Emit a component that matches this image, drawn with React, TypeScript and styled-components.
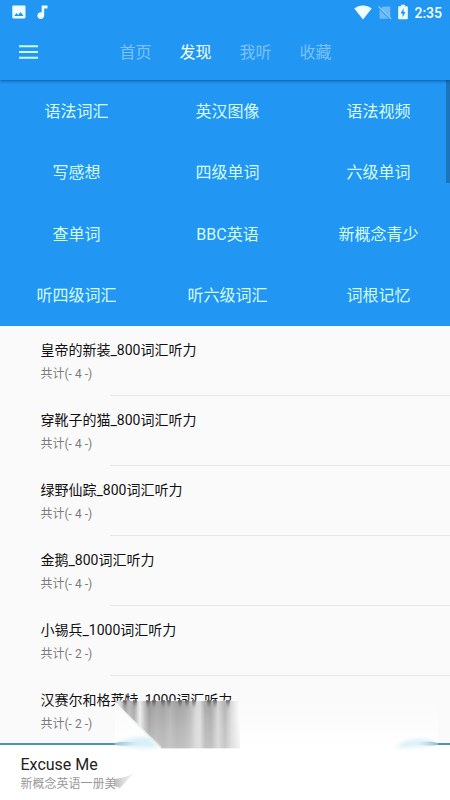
import React from "react";
import styled, { createGlobalStyle } from "styled-components";

const GlobalStyle = createGlobalStyle`
  * { box-sizing: border-box; }
  body {
    margin: 0;
    background: #fafafa;
    font-family: Roboto, "Noto Sans CJK SC", sans-serif;
  }
`;

const Screen = styled.div`
  position: relative;
  display: flex;
  flex-direction: column;
  width: 450px;
  height: 800px;
  overflow: hidden;
  background: #fafafa;
`;

const Header = styled.header`
  position: relative;
  z-index: 1;
  flex: none;
  height: 80px;
  background: #2196f3;
  box-shadow: 0 1px 3px rgba(0, 30, 80, 0.5);
`;

const StatusBar = styled.div`
  display: flex;
  align-items: center;
  height: 24px;
  padding: 0 8px 0 12px;
  color: #f0ffff;
`;

const StatusGroup = styled.div<{ $gap: number }>`
  display: flex;
  align-items: center;
  gap: ${(p) => p.$gap}px;
`;

const Spacer = styled.div`
  flex: 1;
`;

const Clock = styled.span`
  font-size: 14px;
  font-weight: 500;
  line-height: 24px;
  margin-left: 6px;
  padding-top: 2px;
`;

const Toolbar = styled.div`
  display: flex;
  align-items: center;
  height: 56px;
  padding-left: 19px;
`;

const Tabs = styled.nav`
  display: flex;
  gap: 28px;
  margin-left: 81.5px;
  padding-top: 2px;
`;

const Tab = styled.span<{ $active?: boolean }>`
  width: 32px;
  font-size: 16px;
  line-height: 24px;
  white-space: nowrap;
  color: ${(p) => (p.$active ? "#f0ffff" : "#7cc3f9")};
`;

const Categories = styled.section`
  position: relative;
  flex: none;
  display: grid;
  grid-template-columns: repeat(3, 151px);
  grid-template-rows: repeat(4, 61.5px);
  height: 246px;
  padding: 1px 0 0 1px;
  overflow: hidden;
  background: #2196f3;
`;

const Category = styled.div`
  display: flex;
  align-items: center;
  justify-content: center;
  font-size: 16px;
  line-height: 24px;
  color: #d5fbfb;
`;

const ScrollThumb = styled.div`
  position: absolute;
  top: 0;
  right: 0;
  width: 4px;
  height: 103px;
  background: #1a75bd;
`;

const List = styled.main`
  flex: none;
  height: 417px;
  overflow: hidden;
`;

const Row = styled.div`
  position: relative;
  height: 70px;
  padding: 13px 0 0 40.5px;
  &::after {
    content: "";
    position: absolute;
    left: 110px;
    right: 0;
    bottom: 0;
    height: 1px;
    background: #e6e6e6;
  }
`;

const Title = styled.div`
  font-size: 14px;
  line-height: 22px;
  color: #111;
`;

const Count = styled.div`
  margin-top: 3px;
  font-size: 12px;
  line-height: 20px;
  color: #7b7b7b;
`;

const Player = styled.footer`
  flex: none;
  height: 57px;
  padding: 10px 20.5px 0;
  border-top: 2px solid #4b94b5;
  background: #fff;
`;

const Track = styled.div`
  font-size: 16px;
  line-height: 20px;
  color: #222;
`;

const Album = styled.div`
  font-size: 12px;
  line-height: 18px;
  color: #999;
  height: 18px;
`;

const Smear = styled.svg`
  position: absolute;
  z-index: 2;
  left: 100px;
  top: 690px;
`;

const PictureIcon = () => (
  <svg width="14" height="14" viewBox="0 0 14 14">
    <path fill="#f0ffff" fillRule="evenodd" d="M1.5.5h10.8c.7 0 1.2.5 1.2 1.2v10.6c0 .7-.5 1.2-1.2 1.2H1.5C.8 13.500.3 13 .3 12.300V1.700C.3 1 .8.500 1.500.500ZM2.200 11h9.300L8.600 7.100 6.200 10 4.600 8Z" />
  </svg>
);

const NoteIcon = () => (
  <svg width="12" height="14" viewBox="0 0 12 14">
    <path fill="#f0ffff" d="M4.700.5h5.800v3H7.200v7A3.400 3.400 0 1 1 4.700 7.300Z" />
  </svg>
);

const WifiIcon = () => (
  <svg width="18" height="15" viewBox="0 0 18 15">
    <path fill="#f0ffff" d="M.3 3.500C5-.6 13-.6 17.700 3.500L9 14.500Z" />
  </svg>
);

const NoSimIcon = () => (
  <svg width="14" height="15" viewBox="0 0 14 15">
    <path fill="#6dbaf5" d="M5 1.500h6.300c.6 0 1 .4 1 1v11.300H2.500c-.6 0-1-.4-1-1V5Z" />
    <path d="M.8 2.600 12.700 14.600" stroke="#2196f3" strokeWidth="1.500" />
    <path d="M.5 1.500 13.200 14" stroke="#8acaf5" strokeWidth="1.200" />
  </svg>
);

const BatteryIcon = () => (
  <svg width="10" height="16" viewBox="0 0 10 16">
    <path fill="#f0ffff" fillRule="evenodd" d="M3 .7h4v1.500h2c.5 0 .8.3.8.8v11.500c0 .5-.3.800-.8.800H1c-.5 0-.8-.3-.8-.8V3c0-.5.3-.8.8-.8h2ZM5.700 4 2.500 9.500h2v4L7.600 8h-2Z" />
  </svg>
);

const MenuIcon = () => (
  <svg width="19" height="14" viewBox="0 0 19 14">
    <path d="M0 1.300h19M0 7h19M0 12.700h19" stroke="#cafaff" strokeWidth="2" />
  </svg>
);

const streaks: [number, string][] = [
  [0, "#dcdcdc"],
  [5, "#a0a0a0"],
  [9, "#b8b8b8"],
  [14, "#a4a4a4"],
  [20, "#eeeeee"],
  [25, "#b8b8b8"],
  [29, "#969696"],
  [36, "#a6a6a6"],
  [43, "#a0a0a0"],
  [50, "#aeaeae"],
  [57, "#a0a0a0"],
  [64, "#a6a6a6"],
  [70, "#b4b4b4"],
  [76, "#d6d6d6"],
  [80, "#dadada"],
  [85, "#a8a8a8"],
  [91, "#a4a4a4"],
  [98, "#d4d4d4"],
  [105, "#b0b0b0"],
  [111, "#d8d8d8"],
  [119, "#fbfbfb"],
];

const SmearOverlay = () => (
  <Smear width="350" height="110" viewBox="0 0 350 110">
    <defs>
      <linearGradient id="pale" x1="0" y1="0" x2="0" y2="1">
        <stop offset="0" stopColor="#fafafa" />
        <stop offset="1" stopColor="#fff" />
      </linearGradient>
      <linearGradient id="streaks" gradientUnits="userSpaceOnUse" x1="20" y1="0" x2="140" y2="0">
        {streaks.map(([x, color]) => (
          <stop key={x} offset={x / 120} stopColor={color} />
        ))}
      </linearGradient>
      <linearGradient id="top" x1="0" y1="0" x2="0" y2="1">
        <stop offset="0" stopColor="#333" stopOpacity=".65" />
        <stop offset="1" stopColor="#777" stopOpacity="0" />
      </linearGradient>
      <linearGradient id="fade" x1="0" y1="0" x2="0" y2="1">
        <stop offset="0" stopColor="#fff" stopOpacity="0" />
        <stop offset="1" stopColor="#e4e4e4" stopOpacity=".45" />
      </linearGradient>
      <linearGradient id="corner" x1="0" y1="0" x2="1" y2="0">
        <stop offset="0" stopColor="#999" stopOpacity=".9" />
        <stop offset="1" stopColor="#ddd" stopOpacity=".4" />
      </linearGradient>
      <linearGradient id="leftTip" x1="0" y1="0" x2="1" y2="0">
        <stop offset="0" stopColor="#5fa0b8" />
        <stop offset="1" stopColor="#c8e6ef" stopOpacity="0" />
      </linearGradient>
      <linearGradient id="rightTip" x1="1" y1="0" x2="0" y2="0">
        <stop offset="0" stopColor="#5fa0b8" />
        <stop offset="1" stopColor="#c8e6ef" stopOpacity="0" />
      </linearGradient>
      <filter id="soft" x="-30%" y="-60%" width="160%" height="220%">
        <feGaussianBlur stdDeviation="2.2" />
      </filter>
      <filter id="edge" x="-10%" y="-30%" width="120%" height="160%">
        <feGaussianBlur stdDeviation=".6" />
      </filter>
      <clipPath id="wedge">
        <path d="M14 10H142V58.500H61L43 41Z" />
      </clipPath>
    </defs>
    <path d="M15 13 20 10.500H338V58H15Z" fill="url(#pale)" />
    <path d="M15 58H338V108H15Z" fill="#fff" />
    <g clipPath="url(#wedge)">
      <path d="M14 11H140V58.500H14Z" fill="url(#streaks)" />
      <path d="M14 11H140V58.500H14Z" fill="url(#fade)" />
      <g filter="url(#edge)">
        {[25, 35, 48, 54, 63, 69, 80, 87, 94, 109, 115, 128].map((x) => (
          <path key={x} d={`M${x - 2} 10h4l-.7 9h-2.600Z`} fill="url(#top)" />
        ))}
      </g>
    </g>
    <path d="M15 13 61 58" stroke="#f4f6f6" strokeWidth="1.800" opacity=".8" filter="url(#edge)" />
    <path d="M15 54Q32 46 49 47L59 57Q36 60 15 54Z" fill="#d9eff6" filter="url(#soft)" />
    <path d="M14 53 Q30 50 42 54Q30 57 14 55Z" fill="url(#leftTip)" opacity=".75" filter="url(#edge)" />
    <path d="M295 58Q310 43 338 53Q320 58 295 58Z" fill="#dcf1f7" filter="url(#soft)" />
    <path d="M338 53Q324 50 314 53.500Q326 57 338 55Z" fill="url(#rightTip)" opacity=".75" filter="url(#edge)" />
    <path d="M14 89Q25 88 34 83L20 98 14 96Z" fill="url(#corner)" filter="url(#edge)" opacity=".75" />
  </Smear>
);

const tabs = ["首页", "发现", "我听", "收藏"];

const categories = [
  "语法词汇", "英汉图像", "语法视频",
  "写感想", "四级单词", "六级单词",
  "查单词", "BBC英语", "新概念青少",
  "听四级词汇", "听六级词汇", "词根记忆",
];

const lessons = [
  { title: "皇帝的新装_800词汇听力", count: 4 },
  { title: "穿靴子的猫_800词汇听力", count: 4 },
  { title: "绿野仙踪_800词汇听力", count: 4 },
  { title: "金鹅_800词汇听力", count: 4 },
  { title: "小锡兵_1000词汇听力", count: 2 },
  { title: "汉赛尔和格莱特_1000词汇听力", count: 2 },
];

export default function App() {
  return (
    <>
      <GlobalStyle />
      <Screen>
        <Header>
          <StatusBar>
            <StatusGroup $gap={11}>
              <PictureIcon />
              <NoteIcon />
            </StatusGroup>
            <Spacer />
            <StatusGroup $gap={6}>
              <WifiIcon />
              <NoSimIcon />
              <BatteryIcon />
            </StatusGroup>
            <Clock>2:35</Clock>
          </StatusBar>
          <Toolbar>
            <MenuIcon />
            <Tabs>
              {tabs.map((label) => (
                <Tab key={label} $active={label === "发现"}>{label}</Tab>
              ))}
            </Tabs>
          </Toolbar>
        </Header>
        <Categories>
          {categories.map((label) => (
            <Category key={label}>{label}</Category>
          ))}
          <ScrollThumb />
        </Categories>
        <List>
          {lessons.map(({ title, count }) => (
            <Row key={title}>
              <Title>{title}</Title>
              <Count>共计(- {count} -)</Count>
            </Row>
          ))}
        </List>
        <Player>
          <Track>Excuse Me</Track>
          <Album>新概念英语一册美</Album>
        </Player>
        <SmearOverlay />
      </Screen>
    </>
  );
}
